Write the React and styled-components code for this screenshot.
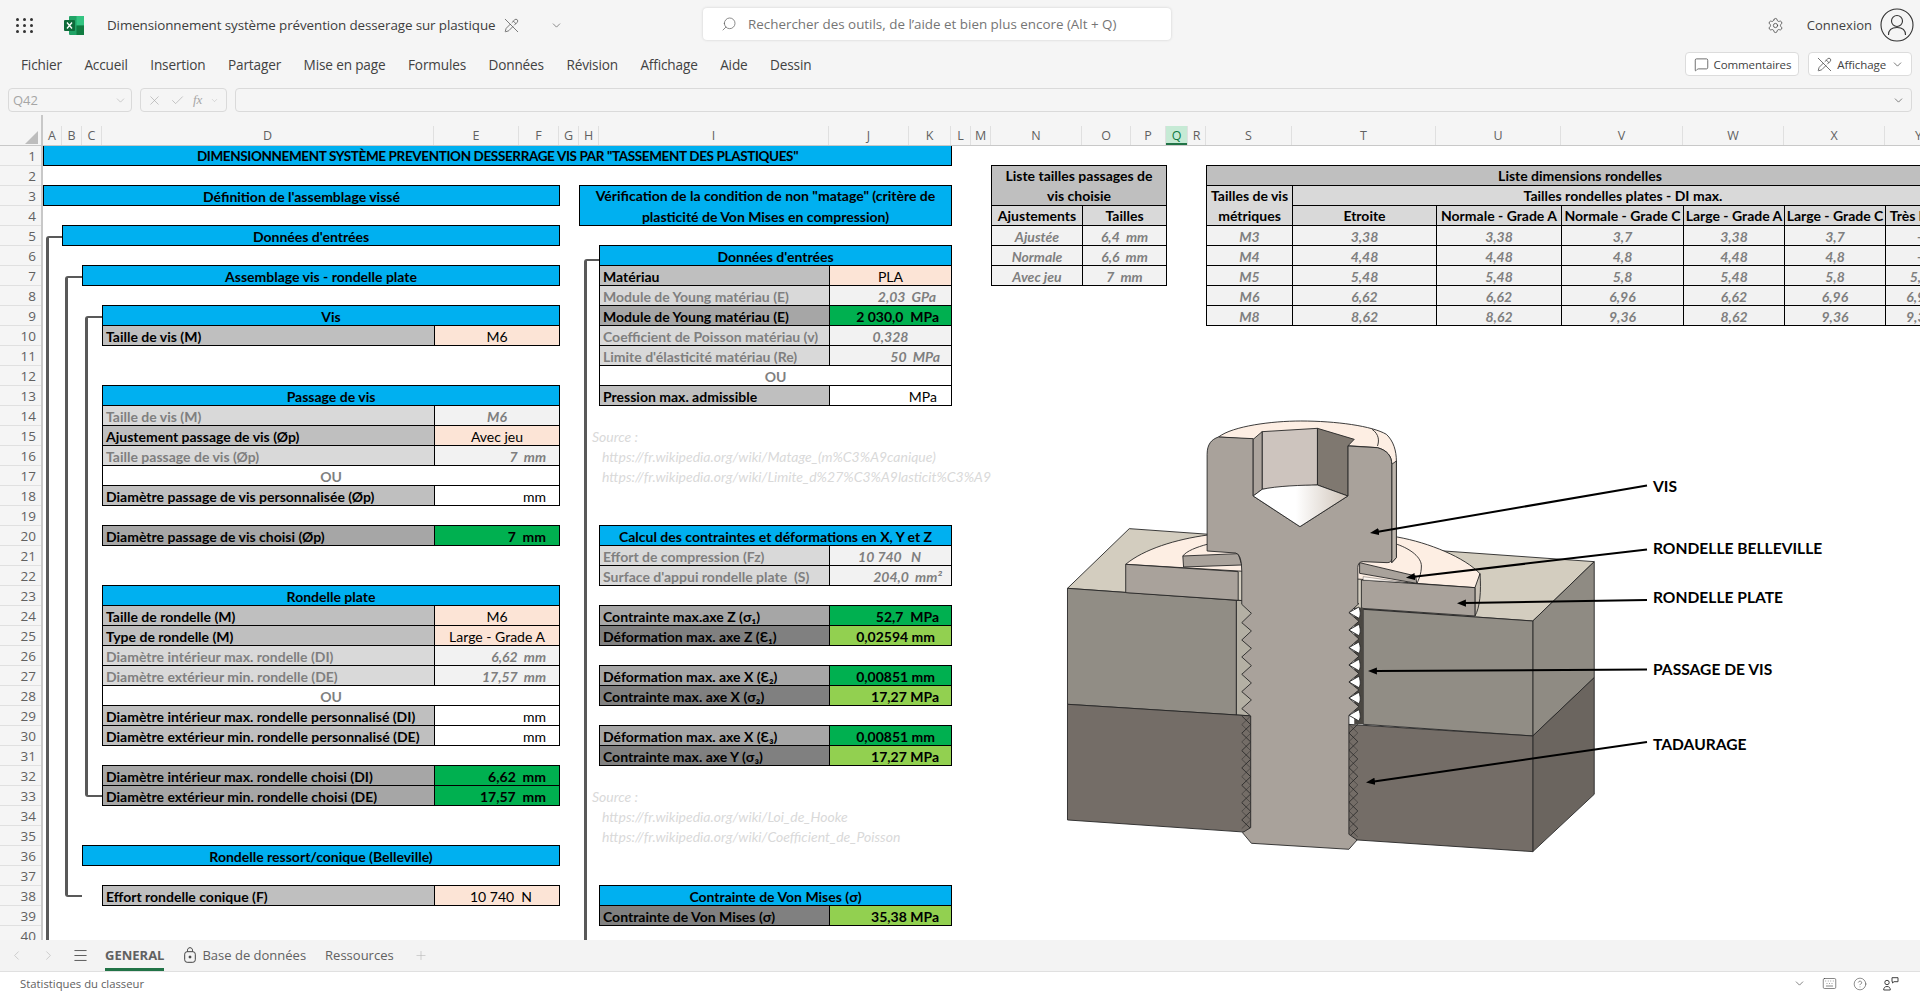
import React from 'react';
import styled, { createGlobalStyle, css } from 'styled-components';
import {
  Check, ChevronDown, ChevronLeft, ChevronRight, CircleHelp, Keyboard, Menu,
  MessageSquare, PencilOff, Plus, Search, Settings, X,
} from 'lucide-react';

const COLS = [
  ['A', 19], ['B', 20], ['C', 20], ['D', 332], ['E', 85], ['F', 40], ['G', 20], ['H', 20], ['I', 230],
  ['J', 80], ['K', 42], ['L', 20], ['M', 20], ['N', 91], ['O', 49], ['P', 35], ['Q', 22], ['R', 18],
  ['S', 86], ['T', 144], ['U', 125], ['V', 122], ['W', 101], ['X', 101], ['Y', 68],
];
const colAt = (letter) => COLS.findIndex((c) => c[0] === letter) + 1;

const FILLS = {
  cyan: '#00B0F0', grey: '#BFBFBF', pale: '#D9D9D9', dark: '#A6A6A6', darker: '#808080',
  input: '#FCE4D6', soft: '#F2F2F2', white: '#FFFFFF', green: '#00B050', lime: '#92D050',
};

const GlobalStyle = createGlobalStyle`
  html, body { margin: 0; padding: 0; background: #fff; }
  * { box-sizing: border-box; }
`;

const Page = styled.div`
  width: 1920px;
  height: 995px;
  display: flex;
  flex-direction: column;
  overflow: hidden;
  background: #f5f5f5;
  color: #424242;
  font-family: "Open Sans", "Noto Sans", sans-serif;
`;

const TitleBar = styled.div`
  height: 50px;
  display: flex;
  align-items: center;
  flex: none;
`;

const TitleLeft = styled.div`
  width: 703px;
  display: flex;
  align-items: center;
  padding-left: 16px;
`;

const Waffle = styled.div`
  display: grid;
  grid-template-columns: repeat(3, 3px);
  gap: 3px 4px;
  span { width: 3px; height: 3px; border-radius: 50%; background: #333; }
`;

const Logo = styled.svg`
  width: 20px;
  height: 19px;
  margin-left: 31px;
`;

const DocTitle = styled.div`
  margin-left: 23px;
  font-size: 13.4px;
  letter-spacing: -0.1px;
  color: #3d3d3d;
  white-space: nowrap;
`;

const SearchBox = styled.div`
  width: 468px;
  height: 32px;
  margin-top: -2px;
  display: flex;
  align-items: center;
  gap: 11px;
  padding-left: 18px;
  background: #fff;
  border-radius: 4px;
  box-shadow: 0 0 3px rgba(0, 0, 0, 0.16);
  font-size: 13.4px;
  color: #757575;
  white-space: nowrap;
  svg { transform: scaleX(-1); color: #616161; }
`;

const TitleRight = styled.div`
  flex: 1;
  display: flex;
  align-items: center;
  justify-content: flex-end;
  padding-right: 6px;
  font-size: 13px;
  color: #424242;
`;

const Connexion = styled.span`
  margin: 0 8px 0 23px;
`;

const Ribbon = styled.div`
  height: 38px;
  display: flex;
  align-items: center;
  flex: none;
  padding: 0 8px 10px 21px;
`;

const MenuList = styled.div`
  flex: 1;
  display: flex;
  gap: 22.5px;
  font-size: 13.6px;
  letter-spacing: -0.15px;
  color: #424242;
`;

const RibbonButton = styled.button`
  height: 24px;
  margin-left: 9px;
  padding: 0 7px 0 8px;
  display: flex;
  align-items: center;
  gap: 5px;
  background: #fff;
  border: 1px solid #dcdcdc;
  border-radius: 4px;
  font-family: inherit;
  font-size: 11.5px;
  letter-spacing: -0.1px;
  color: #424242;
`;

const FormulaBar = styled.div`
  height: 24px;
  flex: none;
  display: flex;
  gap: 8px;
  padding: 0 8px;
`;

const barField = css`
  height: 24px;
  display: flex;
  align-items: center;
  border: 1px solid #dadada;
  border-radius: 4px;
  color: #a6a6a6;
`;

const NameBox = styled.div`
  ${barField}
  width: 124px;
  justify-content: space-between;
  padding: 0 4px;
  font-size: 13px;
`;

const FormulaTools = styled.div`
  ${barField}
  width: 87px;
  gap: 8px;
  padding: 0 4px 0 6px;
  font-family: "Liberation Serif", serif;
  font-style: italic;
  font-size: 13px;
`;

const FormulaInput = styled.div`
  ${barField}
  flex: 1;
  justify-content: flex-end;
  padding-right: 6px;
  color: #424242;
`;

const ColumnStrip = styled.div`
  height: 34px;
  flex: none;
  display: flex;
  align-items: flex-end;
  border-bottom: 1px solid #c8c8c8;
`;

const Corner = styled.div`
  width: 43px;
  height: 30px;
  flex: none;
  position: relative;
  border-right: 2px solid #c8c8c8;
  &::after {
    content: '';
    position: absolute;
    right: 3px;
    bottom: 1px;
    border-style: solid;
    border-width: 0 0 13px 13px;
    border-color: transparent transparent #bdbdbd transparent;
  }
`;

const ColLabel = styled.div`
  height: 19px;
  flex: none;
  width: ${(p) => p.$w}px;
  display: flex;
  align-items: center;
  justify-content: center;
  border-right: 1px solid #e0e0e0;
  font-size: 12.5px;
  color: ${(p) => (p.$active ? '#0e7a42' : '#616161')};
  background: ${(p) => (p.$active ? '#c6ead5' : 'transparent')};
  box-shadow: ${(p) => (p.$active ? 'inset 0 -2px 0 #217346' : 'none')};
`;

const Body = styled.div`
  height: 794px;
  flex: none;
  display: flex;
  overflow: hidden;
`;

const RowHeads = styled.div`
  width: 43px;
  flex: none;
  border-right: 2px solid #c8c8c8;
`;

const RowHead = styled.div`
  height: 20px;
  display: flex;
  align-items: center;
  justify-content: flex-end;
  padding-right: 5px;
  border-bottom: 1px solid #e0e0e0;
  font-size: 13.5px;
  color: #616161;
`;

const Sheet = styled.div`
  flex: 1;
  min-width: 0;
  display: grid;
  grid-template-columns: ${COLS.map((c) => `${c[1]}px`).join(' ')};
  grid-auto-rows: 20px;
  grid-template-rows: repeat(41, 20px);
  background: #fff;
  overflow: hidden;
  font-family: Lato, "Noto Sans", sans-serif;
  font-size: 14px;
  color: #000;
`;

const placed = css`
  grid-column: ${(p) => colAt(p.$from)} / ${(p) => colAt(p.$to || p.$from) + 1};
  grid-row: ${(p) => p.$row} / span ${(p) => p.$span || 1};
`;

const boxed = css`
  ${placed}
  margin: -1px -1px 0 0;
  padding-top: 1px;
  border: 1px solid #000;
  display: flex;
  align-items: center;
  white-space: pre;
  overflow: hidden;
  background: ${(p) => FILLS[p.$tone] || '#fff'};
`;

const Banner = styled.div`
  ${boxed}
  background: ${FILLS.cyan};
  justify-content: center;
  text-align: center;
  font-weight: 700;
  line-height: 21px;
  font-size: ${(p) => (p.$caps ? 13.5 : 14)}px;
  letter-spacing: ${(p) => (p.$caps ? -0.37 : 0)}px;
`;

const Label = styled.div`
  ${boxed}
  padding-left: 3px;
  font-weight: 700;
  color: ${(p) => (p.$tone === 'pale' ? '#7f7f7f' : '#000')};
`;

const Value = styled.div`
  ${boxed}
  justify-content: ${(p) => (p.$pad === undefined ? 'center' : 'flex-end')};
  padding-right: ${(p) => p.$pad || 0}px;
  font-weight: ${(p) => (['green', 'lime', 'soft'].includes(p.$tone) ? 700 : 400)};
  font-style: ${(p) => (p.$tone === 'soft' ? 'italic' : 'normal')};
  color: ${(p) => (p.$tone === 'soft' ? '#7f7f7f' : '#000')};
`;

const Or = styled.div`
  ${boxed}
  justify-content: center;
  font-weight: 700;
  color: #7f7f7f;
`;

const TableHead = styled.div`
  ${boxed}
  justify-content: center;
  text-align: center;
  font-weight: 700;
  line-height: 20px;
`;

const TableCell = styled.div`
  ${boxed}
  justify-content: center;
  background: ${FILLS.soft};
  font-weight: 700;
  font-style: italic;
  color: #7f7f7f;
`;

const Note = styled.div`
  ${placed}
  padding-left: ${(p) => p.$indent || 0}px;
  padding-top: 1px;
  display: flex;
  align-items: center;
  white-space: pre;
  font-style: italic;
  color: #d9d9d9;
`;

const Bracket = styled.div`
  ${placed}
  margin-top: ${(p) => p.$top}px;
  margin-left: ${(p) => p.$left}px;
  margin-bottom: ${(p) => (p.$closed ? 9 : 0)}px;
  border-left: 3px solid #595959;
  border-top: 2px solid #595959;
  border-bottom: ${(p) => (p.$closed ? '2px solid #595959' : 'none')};
  border-top-left-radius: 3px;
  border-bottom-left-radius: 3px;
`;

const Figure = styled.svg`
  grid-column: ${colAt('M')} / ${colAt('Y') + 1};
  grid-row: 14 / span 24;
  width: 982px;
  height: 480px;
  font-family: Lato, sans-serif;
`;

const Tabs = styled.div`
  height: 32px;
  flex: none;
  display: flex;
  align-items: stretch;
  background: #f3f3f3;
  border-bottom: 1px solid #e0e0e0;
  font-size: 13px;
  color: #616161;
`;

const TabTool = styled.div`
  width: ${(p) => p.$w}px;
  flex: none;
  display: flex;
  align-items: center;
  justify-content: center;
  color: ${(p) => p.$color || '#616161'};
`;

const Tab = styled.div`
  display: flex;
  align-items: center;
  gap: 6px;
  margin-left: ${(p) => p.$lead || 0}px;
  margin-right: ${(p) => p.$gap}px;
  font-weight: ${(p) => (p.$active ? 700 : 400)};
  box-shadow: ${(p) => (p.$active ? 'inset 0 -3px 0 #217346' : 'none')};
  padding-bottom: 2px;
`;

const StatusBar = styled.div`
  flex: 1;
  display: flex;
  align-items: center;
  justify-content: space-between;
  padding: 0 21px 0 20px;
  background: #fff;
  font-size: 11.3px;
  color: #616161;
`;

const StatusIcons = styled.div`
  display: flex;
  align-items: center;
  gap: 16px;
  color: #424242;
`;

const rows = (from, to, valueTo, list) => list.map(([row, label, tone, value, vTone, pad]) => (
  <React.Fragment key={`${from}${row}`}>
    <Label $from={from} $to={from} $row={row} $tone={tone}>{label}</Label>
    <Value $from={to} $to={valueTo} $row={row} $tone={vTone} $pad={pad}>{value}</Value>
  </React.Fragment>
));

const LEFT_ROWS = [
  [10, 'Taille de vis (M)', 'grey', 'M6', 'input'],
  [14, 'Taille de vis (M)', 'pale', 'M6', 'soft'],
  [15, 'Ajustement passage de vis (Øp)', 'grey', 'Avec jeu', 'input'],
  [16, 'Taille passage de vis (Øp)', 'pale', '7  mm', 'soft', 13],
  [18, 'Diamètre passage de vis personnalisée (Øp)', 'grey', 'mm', 'white', 13],
  [20, 'Diamètre passage de vis choisi (Øp)', 'dark', '7  mm', 'green', 13],
  [24, 'Taille de rondelle (M)', 'grey', 'M6', 'input'],
  [25, 'Type de rondelle (M)', 'grey', 'Large - Grade A', 'input'],
  [26, 'Diamètre intérieur max. rondelle (DI)', 'pale', '6,62  mm', 'soft', 13],
  [27, 'Diamètre extérieur min. rondelle (DE)', 'pale', '17,57  mm', 'soft', 13],
  [29, 'Diamètre intérieur max. rondelle personnalisé (DI)', 'grey', 'mm', 'white', 13],
  [30, 'Diamètre extérieur min. rondelle personnalisé (DE)', 'grey', 'mm', 'white', 13],
  [32, 'Diamètre intérieur max. rondelle choisi (DI)', 'dark', '6,62  mm', 'green', 13],
  [33, 'Diamètre extérieur min. rondelle choisi (DE)', 'dark', '17,57  mm', 'green', 13],
  [38, 'Effort rondelle conique (F)', 'grey', '10 740  N', 'input', 27],
];

const RIGHT_ROWS = [
  [7, 'Matériau', 'grey', 'PLA', 'input'],
  [8, 'Module de Young matériau (E)', 'pale', '2,03  GPa', 'soft', 15],
  [9, 'Module de Young matériau (E)', 'dark', '2 030,0  MPa', 'green', 12],
  [10, 'Coefficient de Poisson matériau (v)', 'pale', '0,328', 'soft'],
  [11, "Limite d'élasticité matériau (Re)", 'pale', '50  MPa', 'soft', 11],
  [13, 'Pression max. admissible', 'grey', 'MPa', 'white', 14],
  [21, 'Effort de compression (Fz)', 'pale', '10 740   N', 'soft', 30],
  [22, "Surface d'appui rondelle plate  (S)", 'pale', '204,0  mm²', 'soft', 9],
  [24, 'Contrainte max.axe Z (σ₁)', 'dark', '52,7  MPa', 'green', 12],
  [25, 'Déformation max. axe Z (Ɛ₁)', 'darker', '0,02594 mm', 'lime', 16],
  [27, 'Déformation max. axe X (Ɛ₂)', 'dark', '0,00851 mm', 'green', 16],
  [28, 'Contrainte max. axe X (σ₂)', 'darker', '17,27 MPa', 'lime', 12],
  [30, 'Déformation max. axe X (Ɛ₃)', 'dark', '0,00851 mm', 'green', 16],
  [31, 'Contrainte max. axe Y (σ₃)', 'darker', '17,27 MPa', 'lime', 12],
  [39, 'Contrainte de Von Mises (σ)', 'darker', '35,38 MPa', 'lime', 12],
];

const WASHERS = [
  ['M3', '3,38', '3,38', '3,7', '3,38', '3,7', '-'],
  ['M4', '4,48', '4,48', '4,8', '4,48', '4,8', '-'],
  ['M5', '5,48', '5,48', '5,8', '5,48', '5,8', '5,8'],
  ['M6', '6,62', '6,62', '6,96', '6,62', '6,96', '6,96'],
  ['M8', '8,62', '8,62', '9,36', '8,62', '9,36', '9,36'],
];
const WASHER_COLS = ['S', 'T', 'U', 'V', 'W', 'X', 'Y'];
const WASHER_HEADS = ['Etroite', 'Normale - Grade A', 'Normale - Grade C', 'Large - Grade A', 'Large - Grade C', 'Très large'];

const MENU = ['Fichier', 'Accueil', 'Insertion', 'Partager', 'Mise en page', 'Formules', 'Données', 'Révision', 'Affichage', 'Aide', 'Dessin'];

// thread profile: teeth at the given y, x alternating between tip and root
const rightThread = [578, 605, 631, 657, 684, 710, 736, 762, 788, 813, 837, 861, 887, 913]
  .map((y, i) => `${i % 2 ? 865 : 893},${y}`).join(' L');
const leftThread = [893, 867, 842, 816, 790, 764, 738, 712, 687, 660, 635, 607, 580]
  .map((y, i) => `${i % 2 ? 592 : 565},${y}`).join(' L');
const LEAVES = [605, 657, 710, 762, 813, 861, 913];
const lowerWave = (x0, x1, start, n) => {
  let d = `M${x0},${start}`;
  for (let i = 1; i <= n; i += 1) d += ` L${i % 2 ? x1 : x0},${start + i * 26}`;
  return d;
};

const ScrewDrawing = () => (
  <g transform="translate(1040 410) scale(0.3571 0.3333)" stroke="#262626" strokeWidth="2.6" strokeLinejoin="round">
    {/* blocks */}
    <polygon points="77,532 250,353 1552,452 1380,630" fill="#D3CDBF" />
    <polygon points="1380,630 1552,452 1552,800 1380,975" fill="#8F8B83" />
    <polygon points="1380,975 1552,800 1552,1150 1380,1322" fill="#6B655F" />
    <polygon points="77,532 550,568 550,912 77,880" fill="#918D85" />
    <polygon points="550,568 595,570 595,915 550,912" fill="#B4B0A4" />
    <polygon points="905,595 1380,630 1380,975 905,940" fill="#918D85" />
    <polygon points="77,880 595,915 595,1265 77,1227" fill="#746D67" />
    <polygon points="860,940 1380,975 1380,1322 860,1285" fill="#746D67" />
    {/* flat washer top */}
    <path d="M240,460 C290,415 380,385 470,372 L1000,378 C1090,395 1190,440 1232,488 C1232,505 1225,520 1218,530 L900,505 L555,480 Z" fill="#FDEEE3" />
    <path d="M1218,530 L1232,488 C1236,540 1232,590 1218,615 Z" fill="#C9C1B5" />
    <polygon points="240,460 555,482 555,568 240,545" fill="#A9A29B" />
    <polygon points="900,507 1218,530 1218,615 900,592" fill="#A9A29B" />
    {/* belleville washer */}
    <path d="M400,435 C410,420 440,408 468,400" fill="none" />
    <path d="M1000,400 C1040,415 1068,440 1068,465 C1068,490 1060,505 1056,517" fill="none" />
    <polygon points="400,435 555,428 565,462 402,468" fill="#A9A29B" />
    <polygon points="905,497 1030,515 905,507" fill="#FFF8F2" strokeWidth="1" />
    <polygon points="895,455 1052,495 1055,517 895,487" fill="#A9A29B" />
    {/* head rim */}
    <path d="M500,78 C540,45 650,30 730,30 C830,30 930,45 970,70 C990,90 998,120 998,150 L998,440 L985,455 L985,160 C985,135 972,118 945,110 Z" fill="#FDEEE3" />
    <polygon points="985,160 998,150 998,440 985,455" fill="#BDB5AC" />
    <path d="M930,55 C950,70 950,90 945,105" fill="none" />
    {/* thread gap on the right */}
    <rect x="880" y="590" width="25" height="350" fill="#4A4742" strokeWidth="0" />
    {LEAVES.map((y) => (
      <path key={y} d={`M865,${y} L893,${y - 17} C899,${y} 897,${y + 10} 893,${y + 17} Z`} fill="#fff" />
    ))}
    <path d={lowerWave(565, 590, 915, 13)} fill="none" strokeWidth="2.4" />
    <path d={lowerWave(590, 565, 915, 13)} fill="none" strokeWidth="1.4" />
    <path d={lowerWave(890, 865, 940, 13)} fill="none" strokeWidth="2.4" />
    <path d={lowerWave(865, 890, 940, 13)} fill="none" strokeWidth="1.4" />
    {/* screw section */}
    <path
      d={`M500,78 L597,83 L597,255 L728,347 L862,255 L862,105 L945,110 C972,118 985,135 985,160 L985,442 Q985,455 972,455 L905,452 Q890,452 890,470 L890,578 L${rightThread} L865,1270 L888,1287 L865,1315 L592,1297 L567,1265 L590,1250 L590,915 L${leftThread} L565,480 Q565,430 548,426 L468,420 L468,130 C468,100 480,85 500,78 Z`}
      fill="#A9A29B"
    />
    {/* hex socket */}
    <polygon points="622,62 777,52 777,222 622,235" fill="#CDC4BE" />
    <polygon points="597,85 622,62 622,235 597,255" fill="#ACA49D" />
    <polygon points="777,52 880,85 862,105 862,255 777,222" fill="#7F7870" />
    <defs>
      <linearGradient id="cone" x1="0" x2="1" y1="0" y2="0">
        <stop offset="0.45" stopColor="#ffffff" />
        <stop offset="1" stopColor="#CFC4B9" />
      </linearGradient>
    </defs>
    <path d="M597,255 L622,235 C660,225 740,222 777,222 L862,255 L728,347 Z" fill="url(#cone)" />
  </g>
);

const CALLOUTS = [
  { text: 'VIS', x: 1653, y: 491, from: [1647, 484.5], to: [1378, 530.7] },
  { text: 'RONDELLE BELLEVILLE', x: 1653, y: 553, from: [1647, 548.5], to: [1414, 575.7] },
  { text: 'RONDELLE PLATE', x: 1653, y: 602, from: [1647, 599], to: [1465, 602.1] },
  { text: 'PASSAGE DE VIS', x: 1653, y: 674, from: [1647, 668.5], to: [1376, 670] },
  { text: 'TADAURAGE', x: 1653, y: 749, from: [1647, 741], to: [1374, 780.4] },
];

const Callouts = () => (
  <g>
    <defs>
      <marker id="tip" viewBox="0 0 10 8" refX="1" refY="4" markerWidth="4.6" markerHeight="3.6" orient="auto">
        <path d="M0,0 L10,4 L0,8 Z" fill="#000" />
      </marker>
    </defs>
    {CALLOUTS.map((c) => (
      <React.Fragment key={c.text}>
        <line x1={c.from[0]} y1={c.from[1]} x2={c.to[0]} y2={c.to[1]} stroke="#000" strokeWidth="2" markerEnd="url(#tip)" />
        <text x={c.x} y={c.y} fontSize="15.6" fontWeight="700" fill="#000">{c.text}</text>
      </React.Fragment>
    ))}
  </g>
);

const ExcelLogo = () => (
  <Logo viewBox="0 0 20 19">
    <rect x="5" y="0" width="15" height="19" rx="1" fill="#21A366" />
    <rect x="12.5" y="0" width="7.5" height="9.5" fill="#33C481" />
    <rect x="12.5" y="9.5" width="7.5" height="9.5" fill="#107C41" />
    <rect x="0" y="4" width="11" height="11" rx="1" fill="#0E6B3A" />
    <path d="M3,6.5 L8,12.5 M8,6.5 L3,12.5" stroke="#fff" strokeWidth="1.3" />
  </Logo>
);

const Avatar = () => (
  <svg width="34" height="34" viewBox="0 0 34 34" fill="none" stroke="#333" strokeWidth="1.1">
    <circle cx="17" cy="17" r="16" />
    <circle cx="17" cy="13" r="5.5" />
    <path d="M8.5 27 C8.5 21.5 12 19.5 17 19.5 C22 19.5 25.5 21.5 25.5 27" />
  </svg>
);

const LockIcon = () => (
  <svg width="12" height="16" viewBox="0 0 12 16" fill="none" stroke="#424242" strokeWidth="1">
    <rect x="0.7" y="4.7" width="10.6" height="10.6" rx="2.5" />
    <path d="M3.5 4.7 V3.2 C3.5 1.7 4.6 0.7 6 0.7 C7.4 0.7 8.5 1.7 8.5 3.2 V4.7" />
    <circle cx="6" cy="10" r="1" fill="#424242" />
  </svg>
);

const PeopleChat = () => (
  <svg width="16" height="14" viewBox="0 0 16 14" fill="none" stroke="#424242" strokeWidth="1">
    <circle cx="4" cy="5.5" r="2.2" />
    <path d="M0.7 13 C0.7 10.5 2 9.5 4 9.5 C6 9.5 7.3 10.5 7.3 13 Z" />
    <path d="M9 0.7 H15 V4.7 H11 L9.5 6 V4.7 H9 Z" />
  </svg>
);

export default function App() {
  return (
    <Page>
      <GlobalStyle />
      <TitleBar>
        <TitleLeft>
          <Waffle>{Array.from({ length: 9 }, (_, i) => <span key={i} />)}</Waffle>
          <ExcelLogo />
          <DocTitle>Dimensionnement système prévention desserage sur plastique</DocTitle>
          <PencilOff size={15} strokeWidth={1.1} style={{ marginLeft: 9 }} />
          <ChevronDown size={13} strokeWidth={1.1} style={{ marginLeft: 31 }} />
        </TitleLeft>
        <SearchBox>
          <Search size={16} strokeWidth={1.1} />
          Rechercher des outils, de l’aide et bien plus encore (Alt + Q)
        </SearchBox>
        <TitleRight>
          <Settings size={17} strokeWidth={1.1} />
          <Connexion>Connexion</Connexion>
          <Avatar />
        </TitleRight>
      </TitleBar>

      <Ribbon>
        <MenuList>{MENU.map((m) => <span key={m}>{m}</span>)}</MenuList>
        <RibbonButton>
          <MessageSquare size={15} strokeWidth={1.2} />
          Commentaires
        </RibbonButton>
        <RibbonButton>
          <PencilOff size={15} strokeWidth={1.2} />
          Affichage
          <ChevronDown size={13} strokeWidth={1.3} />
        </RibbonButton>
      </Ribbon>

      <FormulaBar>
        <NameBox>
          Q42
          <ChevronDown size={13} strokeWidth={1} />
        </NameBox>
        <FormulaTools>
          <X size={15} strokeWidth={1} />
          <Check size={15} strokeWidth={1} />
          fx
          <ChevronDown size={9} strokeWidth={1} />
        </FormulaTools>
        <FormulaInput><ChevronDown size={13} strokeWidth={1.2} /></FormulaInput>
      </FormulaBar>

      <ColumnStrip>
        <Corner />
        {COLS.map(([letter, w]) => (
          <ColLabel key={letter} $w={w} $active={letter === 'Q'}>{letter}</ColLabel>
        ))}
      </ColumnStrip>

      <Body>
        <RowHeads>
          {Array.from({ length: 40 }, (_, i) => <RowHead key={i}>{i + 1}</RowHead>)}
        </RowHeads>
        <Sheet>
          <Bracket $from="A" $to="A" $row={5} $span={37} $top={10} $left={3} />
          <Bracket $from="B" $to="B" $row={7} $span={32} $top={10} $left={3} $closed />
          <Bracket $from="C" $to="C" $row={9} $span={25} $top={10} $left={3} $closed />
          <Bracket $from="H" $to="H" $row={6} $span={36} $top={13} $left={5} />

          <Banner $from="A" $to="K" $row={1} $caps>DIMENSIONNEMENT SYSTÈME PREVENTION DESSERRAGE VIS PAR "TASSEMENT DES PLASTIQUES"</Banner>
          <Banner $from="A" $to="F" $row={3}>Définition de l'assemblage vissé</Banner>
          <Banner $from="H" $to="K" $row={3} $span={2}>{'Vérification de la condition de non "matage" (critère de\nplasticité de Von Mises en compression)'}</Banner>
          <Banner $from="B" $to="F" $row={5}>Données d'entrées</Banner>
          <Banner $from="C" $to="F" $row={7}>Assemblage vis - rondelle plate</Banner>
          <Banner $from="D" $to="F" $row={9}>Vis</Banner>
          <Banner $from="D" $to="F" $row={13}>Passage de vis</Banner>
          <Banner $from="D" $to="F" $row={23}>Rondelle plate</Banner>
          <Banner $from="C" $to="F" $row={36}>Rondelle ressort/conique (Belleville)</Banner>
          <Or $from="D" $to="F" $row={17}>OU</Or>
          <Or $from="D" $to="F" $row={28}>OU</Or>
          {rows('D', 'E', 'F', LEFT_ROWS)}

          <Banner $from="I" $to="K" $row={6}>Données d'entrées</Banner>
          <Or $from="I" $to="K" $row={12}>OU</Or>
          <Banner $from="I" $to="K" $row={20}>Calcul des contraintes et déformations en X, Y et Z</Banner>
          <Banner $from="I" $to="K" $row={38}>Contrainte de Von Mises (σ)</Banner>
          {rows('I', 'J', 'K', RIGHT_ROWS)}

          <Note $from="H" $to="M" $row={15} $indent={13}>Source :</Note>
          <Note $from="I" $to="N" $row={16} $indent={3}>https://fr.wikipedia.org/wiki/Matage_(m%C3%A9canique)</Note>
          <Note $from="I" $to="N" $row={17} $indent={3}>https://fr.wikipedia.org/wiki/Limite_d%27%C3%A9lasticit%C3%A9</Note>
          <Note $from="H" $to="M" $row={33} $indent={13}>Source :</Note>
          <Note $from="I" $to="N" $row={34} $indent={3}>https://fr.wikipedia.org/wiki/Loi_de_Hooke</Note>
          <Note $from="I" $to="N" $row={35} $indent={3}>https://fr.wikipedia.org/wiki/Coefficient_de_Poisson</Note>

          <TableHead $from="N" $to="P" $row={2} $span={2} $tone="grey">{'Liste tailles passages de\nvis choisie'}</TableHead>
          <TableHead $from="N" $to="N" $row={4} $tone="pale">Ajustements</TableHead>
          <TableHead $from="O" $to="P" $row={4} $tone="pale">Tailles</TableHead>
          {[['Ajustée', '6,4  mm'], ['Normale', '6,6  mm'], ['Avec jeu', '7  mm']].map(([fit, size], i) => (
            <React.Fragment key={fit}>
              <TableCell $from="N" $to="N" $row={5 + i}>{fit}</TableCell>
              <TableCell $from="O" $to="P" $row={5 + i}>{size}</TableCell>
            </React.Fragment>
          ))}

          <TableHead $from="S" $to="Y" $row={2} $tone="grey">Liste dimensions rondelles</TableHead>
          <TableHead $from="S" $to="S" $row={3} $span={2} $tone="pale">{'Tailles de vis\nmétriques'}</TableHead>
          <TableHead $from="T" $to="Y" $row={3} $tone="pale">Tailles rondelles plates - DI max.</TableHead>
          {WASHER_HEADS.map((head, i) => (
            <TableHead key={head} $from={WASHER_COLS[i + 1]} $to={WASHER_COLS[i + 1]} $row={4} $tone="pale">{head}</TableHead>
          ))}
          {WASHERS.map((line, r) => line.map((cell, c) => (
            <TableCell key={`${r}-${c}`} $from={WASHER_COLS[c]} $to={WASHER_COLS[c]} $row={5 + r}>{cell}</TableCell>
          )))}

          <Figure viewBox="971 405 982 480">
            <ScrewDrawing />
            <Callouts />
          </Figure>
        </Sheet>
      </Body>

      <Tabs>
        <TabTool $w={32} $color="#b5b5b5"><ChevronLeft size={15} strokeWidth={1} /></TabTool>
        <TabTool $w={32} $color="#b5b5b5"><ChevronRight size={15} strokeWidth={1} /></TabTool>
        <TabTool $w={32} $color="#333"><Menu size={17} strokeWidth={1.1} /></TabTool>
        <Tab $lead={9} $gap={20} $active>GENERAL</Tab>
        <Tab $gap={19}><LockIcon />Base de données</Tab>
        <Tab $gap={20}>Ressources</Tab>
        <TabTool $w={14} $color="#b5b5b5"><Plus size={15} strokeWidth={1} /></TabTool>
      </Tabs>

      <StatusBar>
        Statistiques du classeur
        <StatusIcons>
          <ChevronDown size={13} strokeWidth={1.2} />
          <Keyboard size={15} strokeWidth={1} />
          <CircleHelp size={14} strokeWidth={1} />
          <PeopleChat />
        </StatusIcons>
      </StatusBar>
    </Page>
  );
}
